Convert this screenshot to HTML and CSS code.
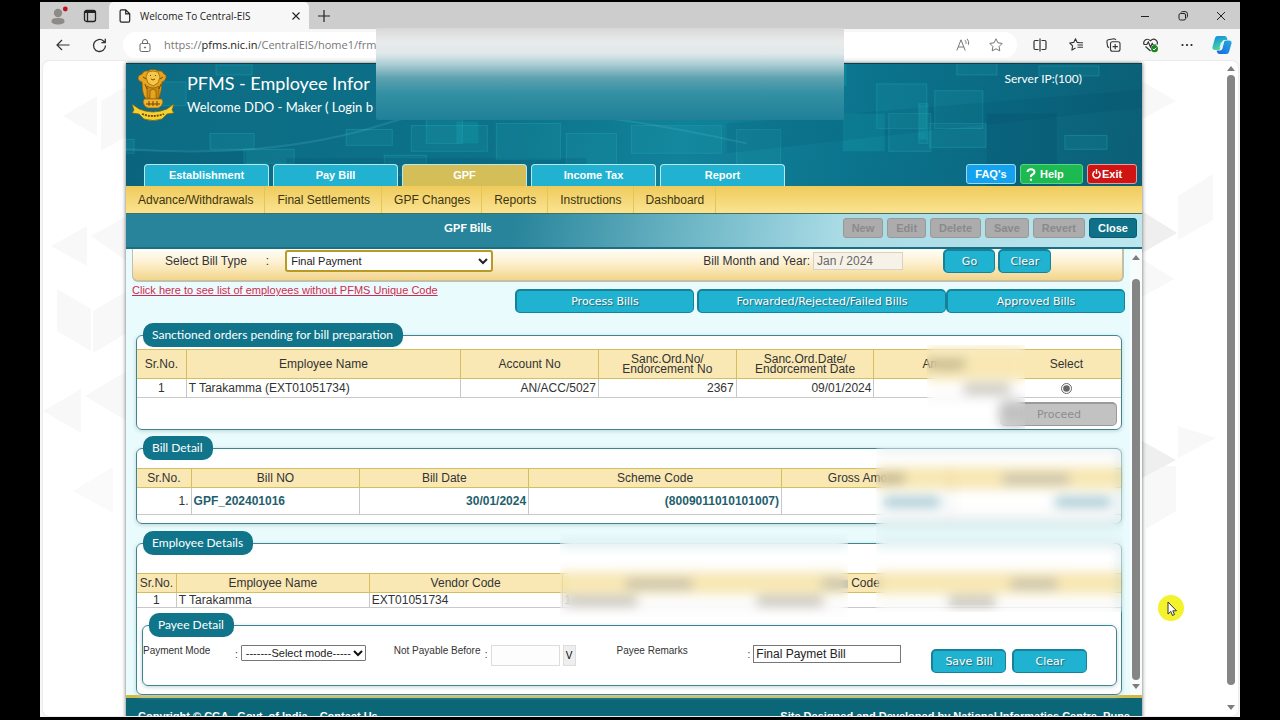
FILE: index.html
```html
<!DOCTYPE html>
<html lang="en">
<head>
<meta charset="utf-8">
<title>Welcome To Central-EIS</title>
<link rel="stylesheet" href="styles.css">
</head>
<body>
<div class="browser">
  <div class="tabstrip">
    <div class="strip-tools">
      <svg width="18" height="20" viewBox="0 0 18 20"><circle cx="8" cy="7" r="4.2" fill="#8f8a88"/><path d="M1.5 15.5c0-3 2.500-3.500 6.500-3.500s6.500.5 6.500 3.500c0 2-3 3-6.500 3s-6.500-1-6.500-3z" fill="#8f8a88"/><circle cx="15.300" cy="3" r="2.400" fill="#c50f1f"/></svg>
      <svg width="14" height="14" viewBox="0 0 14 14" fill="none" stroke="#222" stroke-width="1.300"><rect x="1.500" y="1.500" width="11" height="11" rx="2"/><path d="M1.500 3h11" stroke-width="2"/><path d="M4.500 4v8"/></svg>
    </div>
    <div class="tab">
      <svg width="12" height="14" viewBox="0 0 12 14" fill="none" stroke="#222" stroke-width="1.200"><path d="M2.500.8h4.200l4 4v7q0 1.400-1.400 1.400H2.500q-1.400 0-1.400-1.400V2.200Q1.100.8 2.500.8zM6.700.8v4h4"/></svg>
      <span class="tab-name">Welcome To Central-EIS</span>
      <button class="plain" aria-label="Close tab"><svg width="8" height="8" viewBox="0 0 8 8" stroke="#222" stroke-width="1.100"><path d="M.5.5l7 7M7.500.5l-7 7"/></svg></button>
    </div>
    <button class="plain new-tab" aria-label="New tab"><svg width="12" height="12" viewBox="0 0 12 12" stroke="#222" stroke-width="1.200"><path d="M6 0v12M0 6h12"/></svg></button>
    <div class="window-buttons">
      <button class="plain" aria-label="Minimise"><svg width="10" height="10" viewBox="0 0 10 10" stroke="#222"><path d="M1 5.500h8"/></svg></button>
      <button class="plain" aria-label="Restore"><svg width="10" height="10" viewBox="0 0 10 10" fill="none" stroke="#222"><rect x="1" y="2.500" width="6.500" height="6.500" rx="1.500"/><path d="M3 1.500Q3.300.6 4.500.6H7.200Q9.400.6 9.400 2.800V5.500Q9.400 6.500 8.500 7"/></svg></button>
      <button class="plain" aria-label="Close"><svg width="10" height="10" viewBox="0 0 10 10" stroke="#222"><path d="M1 1l8 8M9 1l-8 8"/></svg></button>
    </div>
  </div>
  <div class="toolbar">
    <button class="plain" aria-label="Back"><svg width="14" height="12" viewBox="0 0 14 12" fill="none" stroke="#333" stroke-width="1.200"><path d="M13.500 6H1M6 1L1 6l5 5"/></svg></button>
    <button class="plain" aria-label="Refresh"><svg width="15" height="15" viewBox="0 0 15 15" fill="none" stroke="#333" stroke-width="1.300"><path d="M13.500 7.500A6 6 0 1 1 11.500 3L13 4.500M13.300.8v3.900H9.400"/></svg></button>
    <div class="address">
      <svg width="12" height="13" viewBox="0 0 12 13" fill="none" stroke="#666"><rect x="1" y="4.500" width="10" height="8" rx="1.500"/><path d="M3.500 4.500V3a2.500 2.500 0 0 1 5 0v1.500"/><circle cx="6" cy="8.500" r=".6" fill="#666"/></svg>
      <span class="url">https://<b>pfms.nic.in</b>/CentralEIS/home1/frm</span>
      <div class="address-tools">
        <svg width="14" height="13" viewBox="0 0 14 13" fill="none" stroke="#777"><path d="M.8 12.500L5 1.800l4.200 10.700M2.200 9h5.600M9 2.200q1.600 1.400 1 3.600M11 .8q2.500 2.400 1.400 6"/></svg>
        <svg width="14" height="14" viewBox="0 0 14 14" fill="none" stroke="#777" stroke-linejoin="round"><path d="M7 .8l1.900 4 4.300.6-3.100 3.100.7 4.400L7 10.800l-3.800 2.100.7-4.400L.8 5.400l4.300-.6z"/></svg>
      </div>
    </div>
    <div class="actions">
      <svg width="14" height="14" viewBox="0 0 14 14" fill="none" stroke="#333" stroke-width="1.200"><path d="M5.500 2.500H2.200Q1 2.500 1 3.700v6.600q0 1.200 1.200 1.200h3.300M8.500 2.500h3.300q1.200 0 1.200 1.200v6.600q0 1.200-1.200 1.200H8.500M7 .5v13"/></svg>
      <svg width="15" height="14" viewBox="0 0 15 14" fill="none" stroke="#333" stroke-width="1.100" stroke-linejoin="round"><path d="M11 4.800L8.200 4.400 6.500.8l-1.800 3.600-4 .6 2.900 2.900-.7 4.200L6.500 10M8.500 7H14M9.500 4.800H14M8.500 9.300H14"/></svg>
      <svg width="15" height="14" viewBox="0 0 15 14" fill="none" stroke="#333" stroke-width="1.100"><rect x="4.500" y="3.800" width="9.500" height="9.500" rx="2"/><path d="M9.200 6v5.200M6.600 8.600h5.200M3 9.800Q1.800 9.200 1.500 8L.9 3.600Q.8 2 2.300 1.700L8 .8q1.400 0 1.900 1.200"/></svg>
      <svg width="16" height="15" viewBox="0 0 16 15" fill="none" stroke="#333" stroke-width="1.200"><path d="M1 6.500C-.2 3 3.500-.8 7.500 2.700 11.500-.8 15.500 3 14 6.500M2.500 8.500l5 4.500M.8 6.500h3l1.500-2.500 2.200 5 1.700-3.500 1 1.500h3"/><circle cx="11.500" cy="10.800" r="3.500" fill="#138a1b" stroke="none"/><path d="M9.800 10.800l1.200 1.200 2.200-2.300" stroke="#fff" stroke-width="1"/></svg>
      <svg width="12" height="4" viewBox="0 0 12 4" fill="#222"><circle cx="1.500" cy="2" r="1.100"/><circle cx="6" cy="2" r="1.100"/><circle cx="10.500" cy="2" r="1.100"/></svg>
      <svg width="20" height="20" viewBox="0 0 20 20"><defs><linearGradient id="cp1" x1="0" y1="0" x2=".4" y2="1"><stop offset="0" stop-color="#1f7fe0"/><stop offset=".5" stop-color="#22b5c8"/><stop offset="1" stop-color="#5ed38f"/></linearGradient><linearGradient id="cp2" x1="0" y1="1" x2="1" y2="0"><stop offset="0" stop-color="#1568e0"/><stop offset="1" stop-color="#29a9dd"/></linearGradient></defs><path d="M5.500 1h7q2 0 2.500 2l.5 2h-3q-2 0-2.500 2L8.300 13.500Q7.800 15 6 15H3Q-.2 15 .5 12L3 3q.6-2 2.500-2z" fill="url(#cp1)"/><path d="M14.500 19h-7q-2 0-2.500-2l-.3-1.500H8q2 0 2.500-2L12 7q.4-1.500 2-1.500h3q3 0 2.500 3L17 17q-.6 2-2.500 2z" fill="url(#cp2)"/><path d="M9 7.500l3-1-1.500 5.500-3 1z" fill="#d9f3fb"/></svg>
    </div>
  </div>

  <div class="viewport">
    <svg class="pattern pattern-left" width="84" height="480" viewBox="0 0 84 480" fill="#f8f8f8"><path d="M20 55l34-20v40zM58 40l26-15v50l-26 15zM8 185l36-20v40zM48 175l36-20v45zM14 228l34 20v42l-34-20zM50 250l34-20v42l-34 20zM0 350l38-22v44zM42 335l42-25v50z"/><path d="M30 430l40-24v46z" fill="#fafafa"/></svg>
    <svg class="pattern pattern-right" width="84" height="500" viewBox="0 0 84 500" fill="#f8f8f8"><path d="M0 20l34 20-34 18zM36 135l35-22v46l-35 20zM0 198l32 20-32 18zM36 365l38 12-38 20zM4 405h30v45L4 468z"/><path d="M0 150l35 22-35 20zM0 380l34 19-34 18z" fill="#efefef"/></svg>
    <div class="page">
      <header class="banner">
        <svg class="banner-art" viewBox="0 0 1015 123" preserveAspectRatio="none" fill="none" stroke="#1fa0b3" stroke-opacity=".45">
          <g fill="#27b3bf" fill-opacity=".12"><rect x="90" y="1" width="36" height="10"/><rect x="30" y="18" width="30" height="24"/><rect x="84" y="70" width="44" height="16"/><rect x="0" y="76" width="8" height="14"/><rect x="220" y="66" width="46" height="16"/><rect x="118" y="86" width="50" height="14"/><rect x="285" y="62" width="76" height="26"/><rect x="300" y="56" width="36" height="24"/><rect x="258" y="92" width="42" height="20"/><rect x="370" y="60" width="64" height="36"/><rect x="440" y="70" width="50" height="34"/><rect x="505" y="62" width="90" height="28"/><rect x="610" y="66" width="44" height="36"/><rect x="762" y="50" width="42" height="38"/><rect x="750" y="20" width="50" height="45"/><rect x="808" y="27" width="48" height="38"/><rect x="792" y="40" width="9" height="40"/><rect x="830" y="-3" width="40" height="14"/><rect x="912" y="2" width="60" height="10"/><rect x="938" y="72" width="42" height="14"/><rect x="803" y="60" width="56" height="24"/></g>
          <g stroke="none" fill="#1ad0cf" fill-opacity=".16"><rect x="716" y="50" width="42" height="38"/><rect x="670" y="-2" width="50" height="24"/><rect x="792" y="42" width="8" height="34"/><rect x="330" y="58" width="22" height="22"/></g>
          <g stroke="none" fill="#003f5c" fill-opacity=".16"><rect x="0" y="88" width="120" height="35"/><rect x="160" y="95" width="300" height="28"/><rect x="860" y="50" width="70" height="73"/><path d="M600 60L1015 26v18L600 90z" fill-opacity=".1"/></g>
          <path stroke="#56c2cd" stroke-opacity=".2" stroke-width="2" d="M0 86Q150 96 260 60T620 80"/>
        </svg>
        <div class="brand">
          <svg class="emblem" width="46" height="52" viewBox="0 0 46 52">
            <g fill="#e7a51f" stroke="#8a5a08" stroke-width=".7">
              <path d="M12 5q2-4 6-3 2-2 5-1.500 3-.5 5 1.500 4-1 6 3 3 1 2 4-1 3-4 4l-1 9q-1 5-3 8H16q-3-4-3.500-9L12 13q-4-1-4-4 0-3 4-4z"/>
              <path d="M18 3q5-2 10 0l2 5-2 6-5 3-5-3-2-6z" fill="#f4c74a"/>
              <path d="M17 17q6 4 12 0v12h-3v-7l-3-2-3 2v7h-3z" fill="#c98812"/>
              <path d="M14 30h18l1 3q-1 5-5 6H18q-4-1-5-6z" fill="#f0b52c"/>
              <path d="M2 35l7 5q14 6 28 0l7-5-2 6 2 3-7 1-5 5q-9 3-18 0l-5-5-7-1 2-3z" fill="#f3d130"/>
            </g>
            <g fill="none" stroke="#70450a"><path d="M20 6l1 1M25 7l1-1M21 10q2 2 4 0M13 8l3 2M33 8l-3 2M15 15l2 5M31 15l-2 5M16 35h14M19 32v5M23 32v5M27 32v5"/><path d="M12 45q11 4 22 0" stroke-width="1.800" stroke-dasharray="2 1"/></g>
          </svg>
          <div class="brand-text">
            <h1>PFMS - Employee Infor</h1>
            <p>Welcome DDO - Maker ( Login b</p>
          </div>
          <div class="server">Server IP:(100)</div>
        </div>
        <nav class="main-tabs">
          <a href="#">Establishment</a><a href="#">Pay Bill</a><a href="#" class="current">GPF</a><a href="#">Income Tax</a><a href="#">Report</a>
          <div class="quick">
            <button class="quick-button faq">FAQ's</button>
            <button class="quick-button help"><svg width="10" height="13" viewBox="0 0 10 13" fill="none" stroke="#fff" stroke-width="2"><path d="M1.500 4Q1.800 1.200 5 1.200T8.500 4Q8.500 5.500 6.500 6.500T5 9"/><circle cx="5" cy="11.700" r="1.200" fill="#fff" stroke="none"/></svg>Help</button>
            <button class="quick-button exit"><svg width="9" height="10" viewBox="0 0 9 10" fill="none" stroke="#fff" stroke-width="1.500"><path d="M2.800 2.300a3.600 3.600 0 1 0 3.400 0M4.500 0v5"/></svg>Exit</button>
          </div>
        </nav>
      </header>
      <nav class="menu"><a href="#">Advance/Withdrawals</a><a href="#">Final Settlements</a><a href="#">GPF Changes</a><a href="#">Reports</a><a href="#">Instructions</a><a href="#">Dashboard</a></nav>
      <div class="titlebar">
        <h2>GPF Bills</h2>
        <div class="commands"><button disabled>New</button><button disabled>Edit</button><button disabled>Delete</button><button disabled>Save</button><button disabled>Revert</button><button class="close">Close</button></div>
      </div>

      <div class="frame">
        <main class="content">
          <form class="filter">
            <label for="billType">Select Bill Type</label><span class="filter-colon">:</span>
            <select id="billType"><option>Final Payment</option></select>
            <div class="filter-right">
              <label for="month">Bill Month and Year:</label>
              <input id="month" value="Jan / 2024" disabled>
              <button type="button" class="action go">Go</button><button type="button" class="action">Clear</button>
            </div>
          </form>
          <div class="links-row">
            <a class="warning" href="#">Click here to see list of employees without PFMS Unique Code</a>
            <div class="bill-links"><button class="action">Process Bills</button><button class="action wide">Forwarded/Rejected/Failed Bills</button><button class="action joined">Approved Bills</button></div>
          </div>

          <fieldset class="box orders">
            <legend>Sanctioned orders pending for bill preparation</legend>
            <table>
              <colgroup><col class="w5"><col class="w28"><col class="w14"><col class="w14"><col class="w14"><col class="w14"><col></colgroup>
              <thead><tr><th>Sr.No.</th><th>Employee Name</th><th>Account No</th><th>Sanc.Ord.No/<br>Endorcement No</th><th>Sanc.Ord.Date/<br>Endorcement Date</th><th class="open">Amount</th><th class="open">Select</th></tr></thead>
              <tbody><tr><td class="center">1</td><td>T Tarakamma (EXT01051734)</td><td class="right">AN/ACC/5027</td><td class="right">2367</td><td class="right">09/01/2024</td><td class="right open"><span class="smudge"></span></td><td class="center open"><input type="radio" checked aria-label="Select order 1"></td></tr></tbody>
            </table>
            <div class="proceed-row"><button class="action proceed" disabled>Proceed</button></div>
            <div class="veil veil-orders"></div>
          </fieldset>

          <div class="details">
            <fieldset class="box bill">
              <legend>Bill Detail</legend>
              <table>
                <colgroup><col class="w5h"><col class="w17"><col class="w17"><col class="w26"><col class="w17"><col></colgroup>
                <thead><tr><th>Sr.No.</th><th>Bill NO</th><th>Bill Date</th><th>Scheme Code</th><th>Gross Amount</th><th><span class="smudge smudge-long"></span></th></tr></thead>
                <tbody><tr><td class="right">1.</td><td class="strong">GPF_202401016</td><td class="right strong">30/01/2024</td><td class="right strong">(8009011010101007)</td><td class="right"><span class="smudge smudge-teal"></span></td><td class="right"><span class="smudge smudge-teal"></span></td></tr></tbody>
              </table>
            </fieldset>
            <fieldset class="box employee">
              <legend>Employee Details</legend>
              <table>
                <colgroup><col class="w4"><col class="w19"><col class="w19"><col class="w19"><col class="w20"><col></colgroup>
                <thead><tr><th>Sr.No.</th><th>Employee Name</th><th>Vendor Code</th><th class="open"><span class="smudge smudge-long"></span></th><th class="open"><span class="smudge smudge-short"></span> Code</th><th class="open"><span class="smudge"></span></th></tr></thead>
                <tbody><tr><td class="center">1</td><td>T Tarakamma</td><td>EXT01051734</td><td class="open">1<span class="smudge smudge-long"></span></td><td class="open"><span class="smudge smudge-long"></span></td><td class="open"><span class="smudge"></span></td></tr></tbody>
              </table>
              <fieldset class="box payee">
                <legend>Payee Detail</legend>
                <div class="payee-row">
                  <div class="field mode"><label for="mode">Payment Mode</label><span>:</span><select id="mode"><option>-------Select mode-----</option></select></div>
                  <div class="field before"><label for="before">Not Payable Before</label><span>:</span><input id="before" disabled><button type="button" class="pick">V</button></div>
                  <div class="field remarks"><label for="remarks">Payee Remarks</label><span>:</span><input id="remarks" value="Final Paymet Bill"></div>
                  <div class="payee-buttons"><button type="button" class="action">Save Bill</button><button type="button" class="action">Clear</button></div>
                </div>
              </fieldset>
            </fieldset>
            <div class="veil veil-right"></div>
            <div class="veil veil-middle"></div>
          </div>
        </main>
        <div class="scroll inner-scroll"><i class="up"></i><b></b><i class="down"></i></div>
      </div>
      <footer class="footer"><div><span>Copyright © CGA , Govt. of India</span><a href="#">Contact Us</a></div><span>Site Designed and Developed by National Informatics Centre, Pune</span></footer>
    </div>
    <div class="scroll outer-scroll"><i class="up"></i><b></b><i class="down"></i></div>
  </div>
  <div class="top-cover"></div>
  <svg class="pointer" width="26" height="26" viewBox="0 0 26 26"><circle cx="13" cy="13" r="13" fill="#f4f22c"/><path d="M10 7v12l2.800-2.500 1.700 4 2-1-1.700-3.700h3.700z" fill="#fff" stroke="#333" stroke-width="1"/></svg>
</div>
</body>
</html>
```
FILE: styles.css
```css
* { box-sizing: border-box; }
body {
  margin: 0;
  height: 100vh;
  padding: 2px 40px 3px;
  background: #000;
  font: 12px/16px "Liberation Sans", Arial, sans-serif;
  color: #333;
  overflow: hidden;
}
button, input, select { font: inherit; margin: 0; }
button { padding: 0; }
a { color: inherit; text-decoration: none; }
svg { display: block; flex: none; }
.plain { border: 0; background: none; display: grid; place-items: center; }

.browser { position: relative; height: 100%; display: flex; flex-direction: column; background: #f7f7f7; overflow: hidden; }
.tabstrip { display: flex; align-items: center; height: 27px; flex: none; background: #cdcdcd; }
.strip-tools { width: 69px; padding-left: 10px; display: flex; align-items: center; gap: 15px; }
.tab {
  width: 200px; height: 27px; padding: 0 9px 0 10px;
  display: flex; align-items: center; gap: 9px;
  background: #f7f7f7; border-radius: 5px 5px 0 0;
  font: 10px/14px "Open Sans", "Noto Sans", sans-serif; color: #222;
}
.tab-name { flex: 1; white-space: nowrap; }
.new-tab { margin-left: 9px; }
.window-buttons { margin-left: auto; padding-right: 14px; display: flex; gap: 28px; }
.toolbar { display: flex; align-items: center; height: 32px; flex: none; padding: 0 8px 0 16px; gap: 22px; }
.address {
  flex: 1; height: 26px; border-radius: 13px; background: #fff;
  display: flex; align-items: center; gap: 13px; padding: 0 14px 0 16px; margin-left: -6px;
}
.url { font: 11px/16px "Open Sans", "Noto Sans", sans-serif; color: #777; white-space: nowrap; }
.url b { font-weight: 400; color: #222; }
.address-tools { margin-left: auto; display: flex; gap: 19px; }
.actions { display: flex; align-items: center; gap: 22px; margin-left: -6px; }
.actions svg:last-child { margin-left: -3px; }

.viewport {
  position: relative; flex: 1; min-height: 0; overflow: hidden;
  margin: 0 2px 1px 3px; padding: 2px 96px 0 83px;
  background: #fff; border: 0; border-radius: 6px; box-shadow: 0 0 2px #ccc;
}
.pattern { position: absolute; top: 0; }
.pattern-left { left: 0; }
.pattern-right { right: 12px; }
.page { position: relative; box-shadow: 0 0 4px #666; }

.banner {
  position: relative; display: flex; flex-direction: column; justify-content: space-between;
  min-height: 123px; border-top: 1px solid #06414f;
  background: linear-gradient(100deg, #0d6c83 0%, #0c7189 35%, #11829a 55%, #0b718b 75%, #0b5f76 100%);
}
.banner-art { position: absolute; inset: 0; width: 100%; height: 100%; }
.brand { position: relative; display: flex; padding: 5px 60px 0 4px; color: #fff; font-family: Lato, sans-serif; }
.brand-text { padding: 1px 0 0 11px; white-space: nowrap; }
.brand h1 { margin: 0; font-size: 18px; line-height: 26px; font-weight: 400; }
.brand p { margin: 0; font-size: 13px; line-height: 22px; }
.server { margin-left: auto; font-size: 12px; line-height: 20px; }
.main-tabs { position: relative; display: flex; gap: 4px; padding: 0 5px 0 18px; font-size: 11px; }
.main-tabs > a {
  flex: 0 1 125px; height: 22px; line-height: 21px; text-align: center;
  background: #20b2d0; border: 1px solid #b9e9f0; border-bottom: 0; border-radius: 4px 4px 0 0;
  color: #fff; font-weight: 700;
}
.main-tabs > a.current { background: #d4be58; }
.quick { margin-left: auto; display: flex; gap: 4px; }
.quick-button {
  height: 20px; display: flex; align-items: center; justify-content: center; gap: 4px;
  border: 1px solid #9fd9ef; border-radius: 3px; color: #fff; font-weight: 700;
}
.faq { width: 50px; background: #12a2f0; }
.help { width: 63px; background: #1cba50; border-color: #5ad480; justify-content: flex-start; padding-left: 5px; }
.exit { width: 50px; background: #d01414; border-color: #dca0a0; gap: 1px; justify-content: flex-start; padding-left: 4px; }
.menu { display: flex; height: 27px; background: linear-gradient(#efcb5c, #fae391); }
.menu a { padding: 0 11px 0 12px; line-height: 28px; border-right: 1px solid #e6c552; color: #3d3510; }
.titlebar {
  display: grid; grid-template-columns: 1fr auto; align-items: start; height: 36px; padding: 4px 5px 0 318px;
  border-top: 1px solid #3f7360; border-bottom: 2px solid #1a6f83;
  background: linear-gradient(100deg, #27849a 0%, #27849a 38%, #6cb5c5 55%, #a9dbe5 70%, #bde6ee 100%);
}
.titlebar h2 { margin: 0; color: #fff; font: 700 12px/20px Lato, sans-serif; }
.commands { display: flex; gap: 4px; font-size: 11px; }
.commands button {
  height: 20px; padding: 0 8px; border: 1px solid #999; border-radius: 3px;
  background: #acacac; color: #8a8a8a; font-weight: 700;
}
.commands .close { background: #0e7188; border-color: #0b5c70; color: #fff; }

.frame { display: flex; background: #eafbfd; }
.content { flex: 1; min-width: 0; padding: 0 5px 0 6px; }
.filter {
  display: flex; align-items: center; height: 33px; padding: 0 71px 7px 32px; margin-right: 1px;
  border: 1px solid #c3bfa8; border-width: 0 2px 2px 1px; border-radius: 0 0 6px 6px;
  background: linear-gradient(#fffefa, #fdf0cf 45%, #f2d58a);
}
.filter-colon { padding: 0 16px 0 19px; }
#billType { width: 208px; height: 22px; padding: 0; border: 2px solid #b99a24; border-radius: 3px; background: #fff; color: #222; font-size: 11px; }
.filter-right { display: flex; align-items: center; margin-left: auto; }
#month { width: 90px; height: 18px; margin: 0 40px 0 3px; padding: 0 3px; border: 1px solid #d8d2c4; background: #f7f2e8; color: #666; }
.action {
  height: 24px; border: 2px solid #168299; border-width: 2px 1px 1px 2px; border-radius: 5px;
  background: #20b3d1; color: #fff; font: 11px/19px "DejaVu Sans", sans-serif; text-shadow: 1px 1px 1px #27616d;
}
.filter .action { width: 53px; }
.filter .go { width: 52px; margin-right: 3px; }
.links-row { display: flex; justify-content: space-between; }
.warning { color: #cf2b50; text-decoration: underline; font-size: 11px; }
.bill-links { display: flex; padding-top: 7px; }
.bill-links .action { width: 179px; }
.bill-links .wide { width: 249px; margin-left: 3px; }

.box {
  position: relative; min-width: 0; margin: 0 3px 0 4px; padding: 0;
  border: 1px solid #3f8590; border-radius: 6px; background: #fff; box-shadow: 0 1px 4px #b8d4d8;
}
legend {
  height: 24px; margin-left: 6px; padding: 0 10px 0 9px; border-radius: 10px;
  background: #10758a; color: #fff; font: 12px/23px Lato, sans-serif;
}
.orders { margin-top: 10px; padding-top: 2px; }
.details { position: relative; margin-top: 6px; }
.bill { padding: 8px 0 8px; }
.employee { margin-top: 7px; padding: 18px 3px 8px 0; }
table { width: 100%; border-collapse: collapse; table-layout: fixed; }
th { height: 19px; padding: 0; font-weight: 400; line-height: 10px; background: #f9e8b3; border: 1px solid #d5bf5c; }
td { height: 19px; padding: 0 2px; line-height: 14px; border: 1px solid #c8c8c8; white-space: nowrap; }
th:first-child, td:first-child { border-left: 0; }
th:last-child, td:last-child { border-right: 0; }
th.open, td.open { border-right: 0; }
th.open + th.open, td.open + td.open { border-left: 0; }
.orders th { height: 29px; }
.bill td { height: 27px; }
.employee td { height: 15px; line-height: 12px; }
.employee > table { width: calc(100% + 3px); }
.center { text-align: center; }
.right { text-align: right; }
.strong { font-weight: 700; color: #1f5f6d; }
.w4 { width: 4%; } .w5 { width: 5%; } .w5h { width: 5.5%; } .w14 { width: 14%; } .w17 { width: 17.15%; }
.w19 { width: 19.6%; } .w20 { width: 19.5%; } .w26 { width: 25.7%; } .w28 { width: 27.9%; }
td input[type="radio"] { width: 11px; height: 11px; vertical-align: middle; accent-color: #666; }
.proceed-row { display: flex; justify-content: flex-end; padding: 4px 4px 3px; }
.proceed { width: 117px; height: 24px; border-color: #9a9a9a; background: #c2c2c2; color: #8d8d8d; text-shadow: none; }

.smudge { display: inline-block; width: 46px; height: 8px; background: #bcb8ac; vertical-align: middle; }
.smudge-long { width: 66px; }
.smudge-short { width: 26px; }
.smudge-teal { width: 56px; margin-right: 8px; background: #8dbac6; }
.veil { position: absolute; backdrop-filter: blur(6px); pointer-events: none; }
.veil-orders { right: 96px; top: -2px; bottom: 0; width: 98px; }
.veil-right { right: 2px; top: 12px; bottom: 83px; width: 247px; }
.veil-middle { right: 277px; top: 98px; bottom: 76px; width: 288px; }

.payee { margin: 5px 1px 0 5px; }
.payee-row { display: flex; align-items: flex-start; padding: 8px 29px 12px 0; font-size: 10px; line-height: 14px; min-height: 48px; white-space: nowrap; }
.field { display: flex; align-items: flex-start; }
.field label { margin-top: -1px; }
.field > span { padding: 3px 3px 0 2px; }
.mode label { width: 90px; }
#mode {
  appearance: none; width: 125px; height: 16px; padding: 0 0 0 4px; border: 1px solid #777; border-radius: 1px;
  background: #fff url("data:image/svg+xml,%3Csvg xmlns='http://www.w3.org/2000/svg' width='10' height='8' fill='none' stroke='%23111' stroke-width='2'%3E%3Cpath d='M1 2l4 4 4-4'/%3E%3C/svg%3E") no-repeat right 2px center;
  color: #222; font-size: 11px; line-height: 14px;
}
.before { margin-left: 28px; }
.before label { width: 89px; }
#before { width: 69px; height: 21px; border: 1px solid #ddd; background: #fdfdfd; }
.pick { width: 13px; height: 21px; margin-left: 3px; border: 1px solid #ddd; background: #eee; }
.remarks { margin-left: 41px; }
.remarks label { width: 129px; }
#remarks { width: 148px; height: 18px; padding: 0 2px; border: 1px solid #777; color: #222; font-size: 12px; }
.payee-buttons { display: flex; gap: 6px; margin: 4px 0 0 auto; }
.payee-buttons .action { width: 75px; }

.scroll { display: flex; flex-direction: column; align-items: center; }
.scroll b { flex: 1; width: 8px; border-radius: 4px; background: #858585; }
.scroll i { width: 0; height: 0; border: 4px solid transparent; }
.scroll .up { border-top: 0; border-bottom: 5px solid #7d7d7d; }
.scroll .down { border-bottom: 0; border-top: 5px solid #7d7d7d; }
.inner-scroll { width: 12px; padding: 6px 0 6px; background: #f7fdfd; gap: 4px; }
.inner-scroll .up { margin-bottom: 15px; }
.outer-scroll { position: absolute; right: 0; top: 0; bottom: 0; width: 14px; padding: 5px 0 6px; gap: 4px; }
.outer-scroll .down { margin-top: 16px; }
.footer {
  display: flex; justify-content: space-between; padding: 10px 12px; border-top: 3px solid #d2b845;
  background: #0b6677; color: #fff; font-size: 11px; line-height: 16px; font-weight: 700;
}
.footer a { margin-left: 12px; }
.top-cover {
  position: absolute; left: 28%; top: 26px; width: 39%; height: 92px; border-radius: 2px;
  background: linear-gradient(#d8d8d8 0, #e9ebeb 15%, #dfe8ea 28%, #a9ccd3 40%, #5fa2b0 54%, #3591a4 70%, #1f8098 100%);
}
.pointer { position: absolute; right: 56px; bottom: 96px; }
```
